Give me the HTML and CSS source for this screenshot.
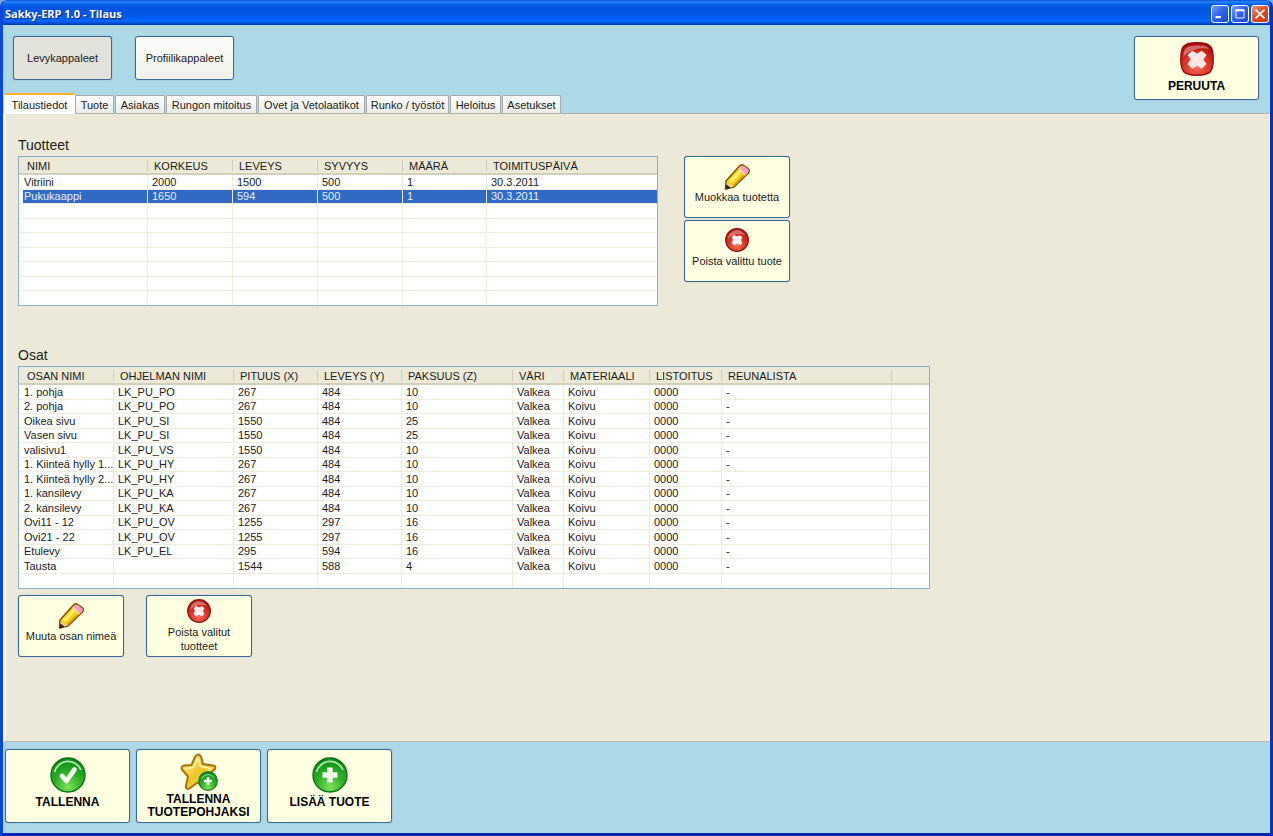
FILE: index.html
```html
<!DOCTYPE html>
<html lang="fi">
<head>
<meta charset="utf-8">
<title>Sakky-ERP 1.0 - Tilaus</title>
<link rel="stylesheet" href="styles.css">
</head>
<body>
<svg class="defs" aria-hidden="true">
  <defs>
    <radialGradient id="g-red" cx="50%" cy="75%" r="75%"><stop offset="0" stop-color="#f4705a"/><stop offset=".55" stop-color="#da3023"/><stop offset="1" stop-color="#a80c0c"/></radialGradient>
    <radialGradient id="g-green" cx="50%" cy="85%" r="80%"><stop offset="0" stop-color="#7fe05a"/><stop offset=".5" stop-color="#31b02a"/><stop offset="1" stop-color="#0e8a1c"/></radialGradient>
    <linearGradient id="g-gold" x1="0" y1="0" x2="1" y2="1"><stop offset="0" stop-color="#fff3a0"/><stop offset=".5" stop-color="#efc52a"/><stop offset="1" stop-color="#f8dd55"/></linearGradient>
    <symbol id="i-cancel" viewBox="0 0 34 34">
      <path d="M17 .8C24 .8 27.500 1.500 30 4C32.500 6.500 33.200 10 33.200 17C33.200 24 32.500 27.500 30 30C27.500 32.500 24 33.200 17 33.200C10 33.200 6.500 32.500 4 30C1.500 27.500 .8 24 .8 17C.8 10 1.500 6.500 4 4C6.500 1.500 10 .8 17 .8Z" fill="url(#g-red)" stroke="#960b0b" stroke-width="1.400"/>
      <path d="M3.500 15C3.500 6 6 3.500 17 3.500C24 3.500 27 4 29 7C22 5 9 7 3.500 15Z" fill="#fff" opacity=".35"/>
      <path d="M12.500 9.500L17 12.500L21.500 9.500L25.500 13L22.500 17.500L25.500 22L21.500 26L17 22.800L12.500 26L8.500 22L11.500 17.500L8.500 13Z" fill="#ffe6e2" stroke="#ffe6e2" stroke-width="1.500" stroke-linejoin="round"/>
    </symbol>
    <symbol id="i-delete" viewBox="0 0 24 24">
      <circle cx="12" cy="12" r="11.300" fill="url(#g-red)" stroke="#8e1010" stroke-width="1.200"/>
      <path d="M3 11A9 9 0 0 1 20 7C14 5 7 6 3 11Z" fill="#fff" opacity=".35"/>
      <path d="M9 7.500L12 9L15 7.500L16.800 9.300L15.500 12L16.800 15L15 16.800L12 15.300L9 16.800L7.200 15L8.500 12L7.200 9.300Z" fill="#fff0ee" stroke="#fff0ee" stroke-linejoin="round"/>
    </symbol>
    <symbol id="i-pencil" viewBox="0 0 26 26">
      <path d="M1.500 25L2 17L15.500 2Q17.500 .3 19.500 1.300L24.500 5Q26 6.500 24.500 9L10 23Z" fill="#f6ce22" stroke="#80590c" stroke-width="1.600" stroke-linejoin="round"/>
      <path d="M5 17L16.500 4.500L19 6L7.500 19Z" fill="#fff06a"/>
      <path d="M9 21L21.500 9L23 10L10.500 22Z" fill="#d79610"/>
      <path d="M15.500 3.800L17.500 1.800Q19 1.500 20 2L24 5.200Q25 6.500 24 8.500L21.800 10.500Z" fill="#f49ac4"/>
      <path d="M14.500 5L15.500 3.800L21.800 10.500L20.500 11.500Z" fill="#e5dbbf"/>
      <path d="M2.200 24.500L2.700 18L9.500 22.500Z" fill="#e8c98a"/>
      <path d="M2 25L2.300 21L6 23.800Z" fill="#2c241c" stroke="#2c241c"/>
    </symbol>
    <symbol id="i-ball" viewBox="0 0 36 36">
      <circle cx="18" cy="18" r="17" fill="url(#g-green)" stroke="#0a7416" stroke-width="1.400"/>
      <path d="M4.500 15A14 14 0 0 1 31 13" fill="none" stroke="#d4ffc8" stroke-width="1.800" opacity=".8"/>
    </symbol>
    <symbol id="i-check" viewBox="0 0 36 36">
      <use href="#i-ball"/>
      <path d="M12 19L16.500 24L24.500 12.500" fill="none" stroke="#f4fff0" stroke-width="4.800" stroke-linejoin="round" stroke-linecap="round"/>
    </symbol>
    <symbol id="i-plus" viewBox="0 0 36 36">
      <use href="#i-ball"/>
      <path d="M18 10.500V25.500M10.500 18H25.500" fill="none" stroke="#effbea" stroke-width="5.500" stroke-linejoin="round"/>
    </symbol>
    <symbol id="i-star" viewBox="0 0 38 38">
      <path d="M18 1.500Q20.500 1.500 21.500 5L23 11L33 12.500Q37 13.500 34.500 16.500L27.500 23L28 31Q28 35.500 24 33.500L17.500 29.500L9.500 35.500Q5.500 37 6 32.500L8 23.500L2 16.500Q.5 13 4.500 12.500L11.500 12L15 4Q16.500 1.500 18 1.500Z" fill="url(#g-gold)" stroke="#a87410" stroke-width="2" stroke-linejoin="round"/>
      <path d="M18 5L20.500 13.500L31 15.500L24.500 21M18 5L13.500 14.500L5 15.500" fill="none" stroke="#fff8be" stroke-width="1.300"/>
      <circle cx="28" cy="28" r="9.300" fill="url(#g-green)" stroke="#157c1c" stroke-width="1.200"/>
      <path d="M21.500 26A7 7 0 0 1 34 25" fill="none" stroke="#d4ffc8" opacity=".7"/>
      <path d="M28 24V32M24 28H32" stroke="#f4fff0" stroke-width="2.600"/>
    </symbol>
  </defs>
</svg>

<div class="window">
  <header class="titlebar">
    <h1 class="title">Sakky-ERP 1.0 - Tilaus</h1>
    <div class="controls">
      <button class="ctl" aria-label="Pienennä"><svg viewBox="0 0 18 18"><path d="M4 12.500H10" stroke="#fff" stroke-width="2.500"/></svg></button>
      <button class="ctl" aria-label="Suurenna"><svg viewBox="0 0 18 18"><path d="M4.500 4.500H13.500V13.500H4.500Z" fill="none" stroke="#fff"/><path d="M4 5H14" stroke="#fff" stroke-width="2"/></svg></button>
      <button class="ctl ctl-close" aria-label="Sulje"><svg viewBox="0 0 18 18"><path d="M4 4L14 14M14 4L4 14" stroke="#fff" stroke-width="2"/></svg></button>
    </div>
  </header>

  <div class="toolbar">
    <button class="btn btn-view is-pressed">Levykappaleet</button>
    <button class="btn btn-view">Profiilikappaleet</button>
    <button class="btn btn-cream btn-cancel"><svg class="ico-34"><use href="#i-cancel"/></svg><span>PERUUTA</span></button>
  </div>

  <div class="tabs" role="tablist">
    <button class="tab is-active" role="tab" aria-selected="true">Tilaustiedot</button>
    <button class="tab" role="tab">Tuote</button>
    <button class="tab" role="tab">Asiakas</button>
    <button class="tab" role="tab">Rungon mitoitus</button>
    <button class="tab" role="tab">Ovet ja Vetolaatikot</button>
    <button class="tab" role="tab">Runko / työstöt</button>
    <button class="tab" role="tab">Heloitus</button>
    <button class="tab" role="tab">Asetukset</button>
  </div>

  <main class="panel" role="tabpanel">
    <section>
      <h2 class="heading">Tuotteet</h2>
      <div class="products">
        <table class="list">
          <colgroup><col class="w129"><col class="w85"><col class="w85"><col class="w85"><col class="w84"><col class="w170"></colgroup>
          <thead><tr><th>NIMI</th><th>KORKEUS</th><th>LEVEYS</th><th>SYVYYS</th><th>MÄÄRÄ</th><th>TOIMITUSPÄIVÄ</th></tr></thead>
          <tbody>
            <tr><td>Vitriini</td><td>2000</td><td>1500</td><td>500</td><td>1</td><td>30.3.2011</td></tr>
            <tr class="is-selected"><td>Pukukaappi</td><td>1650</td><td>594</td><td>500</td><td>1</td><td>30.3.2011</td></tr>
            <tr><td></td><td></td><td></td><td></td><td></td><td></td></tr>
            <tr><td></td><td></td><td></td><td></td><td></td><td></td></tr>
            <tr><td></td><td></td><td></td><td></td><td></td><td></td></tr>
            <tr><td></td><td></td><td></td><td></td><td></td><td></td></tr>
            <tr><td></td><td></td><td></td><td></td><td></td><td></td></tr>
            <tr><td></td><td></td><td></td><td></td><td></td><td></td></tr>
            <tr><td></td><td></td><td></td><td></td><td></td><td></td></tr>
          </tbody>
        </table>
        <div class="side">
          <button class="btn btn-cream btn-small"><svg class="ico-26"><use href="#i-pencil"/></svg><span>Muokkaa tuotetta</span></button>
          <button class="btn btn-cream btn-small"><svg class="ico-24"><use href="#i-delete"/></svg><span>Poista valittu tuote</span></button>
        </div>
      </div>
    </section>

    <section class="parts">
      <h2 class="heading">Osat</h2>
      <table class="list">
        <colgroup><col class="w95"><col class="w120"><col class="w84"><col class="w84"><col class="w111"><col class="w51"><col class="w86"><col class="w72"><col class="w170"><col class="w37"></colgroup>
        <thead><tr><th>OSAN NIMI</th><th>OHJELMAN NIMI</th><th>PITUUS (X)</th><th>LEVEYS (Y)</th><th>PAKSUUS (Z)</th><th>VÄRI</th><th>MATERIAALI</th><th>LISTOITUS</th><th>REUNALISTA</th><th></th></tr></thead>
        <tbody>
          <tr><td>1. pohja</td><td>LK_PU_PO</td><td>267</td><td>484</td><td>10</td><td>Valkea</td><td>Koivu</td><td>0000</td><td>-</td><td></td></tr>
          <tr><td>2. pohja</td><td>LK_PU_PO</td><td>267</td><td>484</td><td>10</td><td>Valkea</td><td>Koivu</td><td>0000</td><td>-</td><td></td></tr>
          <tr><td>Oikea sivu</td><td>LK_PU_SI</td><td>1550</td><td>484</td><td>25</td><td>Valkea</td><td>Koivu</td><td>0000</td><td>-</td><td></td></tr>
          <tr><td>Vasen sivu</td><td>LK_PU_SI</td><td>1550</td><td>484</td><td>25</td><td>Valkea</td><td>Koivu</td><td>0000</td><td>-</td><td></td></tr>
          <tr><td>valisivu1</td><td>LK_PU_VS</td><td>1550</td><td>484</td><td>10</td><td>Valkea</td><td>Koivu</td><td>0000</td><td>-</td><td></td></tr>
          <tr><td>1. Kiinteä hylly 1...</td><td>LK_PU_HY</td><td>267</td><td>484</td><td>10</td><td>Valkea</td><td>Koivu</td><td>0000</td><td>-</td><td></td></tr>
          <tr><td>1. Kiinteä hylly 2...</td><td>LK_PU_HY</td><td>267</td><td>484</td><td>10</td><td>Valkea</td><td>Koivu</td><td>0000</td><td>-</td><td></td></tr>
          <tr><td>1. kansilevy</td><td>LK_PU_KA</td><td>267</td><td>484</td><td>10</td><td>Valkea</td><td>Koivu</td><td>0000</td><td>-</td><td></td></tr>
          <tr><td>2. kansilevy</td><td>LK_PU_KA</td><td>267</td><td>484</td><td>10</td><td>Valkea</td><td>Koivu</td><td>0000</td><td>-</td><td></td></tr>
          <tr><td>Ovi11 - 12</td><td>LK_PU_OV</td><td>1255</td><td>297</td><td>16</td><td>Valkea</td><td>Koivu</td><td>0000</td><td>-</td><td></td></tr>
          <tr><td>Ovi21 - 22</td><td>LK_PU_OV</td><td>1255</td><td>297</td><td>16</td><td>Valkea</td><td>Koivu</td><td>0000</td><td>-</td><td></td></tr>
          <tr><td>Etulevy</td><td>LK_PU_EL</td><td>295</td><td>594</td><td>16</td><td>Valkea</td><td>Koivu</td><td>0000</td><td>-</td><td></td></tr>
          <tr><td>Tausta</td><td></td><td>1544</td><td>588</td><td>4</td><td>Valkea</td><td>Koivu</td><td>0000</td><td>-</td><td></td></tr>
          <tr><td></td><td></td><td></td><td></td><td></td><td></td><td></td><td></td><td></td><td></td></tr>
        </tbody>
      </table>
      <div class="part-actions">
        <button class="btn btn-cream btn-small"><svg class="ico-26"><use href="#i-pencil"/></svg><span>Muuta osan nimeä</span></button>
        <button class="btn btn-cream btn-small btn-two"><svg class="ico-24"><use href="#i-delete"/></svg><span>Poista valitut tuotteet</span></button>
      </div>
    </section>
  </main>

  <footer class="footer">
    <button class="btn btn-cream btn-big"><svg class="ico-36"><use href="#i-check"/></svg><span>TALLENNA</span></button>
    <button class="btn btn-cream btn-big btn-tall"><svg class="ico-38"><use href="#i-star"/></svg><span>TALLENNA TUOTEPOHJAKSI</span></button>
    <button class="btn btn-cream btn-big"><svg class="ico-36"><use href="#i-plus"/></svg><span>LISÄÄ TUOTE</span></button>
  </footer>
</div>
</body>
</html>
```
FILE: styles.css
```css
* { box-sizing: border-box; }

body {
  margin: 0;
  background: #7ba7e8;
  font: 11px/14px "Liberation Sans", Arial, sans-serif;
  color: #1c1c1c;
}

button { font: inherit; color: inherit; margin: 0; padding: 0; }
.defs { position: absolute; width: 0; height: 0; }

.window {
  display: flex;
  flex-direction: column;
  min-height: 100vh;
  border: solid #0a48dc;
  border-width: 0 3px 3px;
  border-right-color: #0831c4;
  border-bottom-color: #0628b0;
  border-radius: 7px 7px 0 0;
  overflow: hidden;
  background: #add8e6;
}

/* title bar */
.titlebar {
  display: flex;
  justify-content: space-between;
  align-items: center;
  height: 25px;
  margin: 0 -3px;
  padding: 2px 4px 0 5px;
  background: linear-gradient(#0a50d8 0, #2b86fb 2px, #0662ee 4px, #0054e0 9px, #0058ea 16px, #0267ff 21px, #0450d8 23px, #0338b4 25px);
}
.title {
  margin: 0;
  font: 700 11px/16px "Open Sans", "Trebuchet MS", sans-serif;
  color: #fff;
  text-shadow: 1px 1px #0c2c80;
}
.controls { display: flex; gap: 2px; }
.ctl {
  width: 18px;
  height: 18px;
  border: 1px solid #fff;
  border-radius: 3px;
  background: linear-gradient(135deg, #7aa0f4, #2f62e4 50%, #1c4cd0);
}
.ctl svg { display: block; width: 16px; height: 16px; }
.ctl-close { background: linear-gradient(135deg, #f0957a, #dc4c24 50%, #c03a10); }

/* buttons */
.btn {
  border: 1px solid #3b6a96;
  border-radius: 3px;
  box-shadow: 0 0 1px #5b86ac;
  background: linear-gradient(#fcfcfb, #f0f0ea);
}
.btn svg { flex: none; }
.btn-cream {
  display: flex;
  flex-direction: column;
  align-items: center;
  background: #ffffe1;
}
.btn-view { width: 99px; height: 44px; }
.btn-view.is-pressed { background: #e2e1da; }
.btn-cancel {
  width: 125px;
  height: 64px;
  margin-left: auto;
  padding-top: 5px;
  gap: 3px;
  font-weight: 700;
  font-size: 12px;
  color: #000;
}
.btn-small { width: 106px; height: 62px; padding-top: 7px; }
.btn-small span { padding: 0 12px; }
.btn-small .ico-26 + span, .side .btn-small span { padding: 0; white-space: nowrap; }
.btn-small .ico-24 { margin-bottom: 2px; }
.btn-two { padding-top: 3px; }
.btn-big {
  width: 125px;
  height: 74px;
  padding-top: 7px;
  gap: 2px;
  font-weight: 700;
  font-size: 12px;
  color: #000;
}
.btn-tall { padding-top: 3px; gap: 2px; }
.btn-tall span { line-height: 13px; }

.ico-24 { width: 24px; height: 24px; }
.ico-26 { width: 26px; height: 26px; }
.ico-34 { width: 34px; height: 34px; }
.ico-36 { width: 36px; height: 36px; }
.ico-38 { width: 38px; height: 38px; }

/* toolbar and tabs */
.toolbar {
  display: flex;
  align-items: flex-start;
  gap: 23px;
  height: 68px;
  padding: 11px 11px 0 10px;
}
.tabs {
  display: grid;
  grid-template-columns: 71px 40px 51px 92px 108px 84px 52px 60px;
  align-items: end;
  height: 20px;
  padding-left: 1px;
}
.tab {
  height: 18px;
  margin-right: 1px;
  border: 1px solid #a5acb0;
  border-bottom: 0;
  border-radius: 2px 2px 0 0;
  background: linear-gradient(#fff, #ecebe6);
  white-space: nowrap;
}
.tab.is-active {
  height: 21px;
  margin: 0 0 -1px;
  border: 0;
  border-top: 2px solid #ffb02e;
  background: #fcfcfe;
  position: relative;
}

/* tab page */
.panel {
  flex: 1;
  padding: 23px 15px 24px 12px;
  border: 1px solid #b4b5ac;
  border-left: 3px solid #fbfbf8;
  border-right-color: #f4f3ee;
  background: #ece9d8;
}
.heading { margin: 0 0 3px; font: 14px/16px "Liberation Sans", Arial, sans-serif; }
.products { display: flex; align-items: flex-start; gap: 26px; }
.side { display: flex; flex-direction: column; gap: 2px; }
.parts { margin-top: 41px; }
.part-actions { display: flex; gap: 22px; margin-top: 6px; }

/* list views */
.list {
  width: min-content;
  table-layout: fixed;
  border: 1px solid #8fb0cd;
  border-collapse: separate;
  border-spacing: 0;
  background: #fff;
}
.list th {
  height: 18px;
  padding: 2px 0 0 6px;
  border-bottom: 2px solid #d2cfba;
  background: linear-gradient(#d0cdbd, #d0cdbd) 100% 60% / 1px 11px no-repeat #ece9d8;
  font-weight: 400;
  line-height: 14px;
  text-align: left;
  white-space: nowrap;
}
.list th:first-child { padding-left: 8px; }
.list th:last-child { background: #ece9d8; }
.list td {
  height: 14px;
  padding: 0 0 0 4px;
  border-right: 1px solid #efecdc;
  border-bottom: 1px solid #efecdc;
  line-height: 13px;
  white-space: nowrap;
}
.list tr:nth-child(odd) td { height: 15px; }
.list td:first-child { padding-left: 5px; }
.list td:last-child { border-right: 0; }
.list tbody tr:last-child td { height: 14px; border-bottom: 0; }
.list .is-selected td { background: #316ac5; color: #e6eefb; }
.list .is-selected td:first-child { background: linear-gradient(90deg, #fff 4px, #316ac5 4px); }

.w37 { width: 37px; }
.w51 { width: 51px; }
.w72 { width: 72px; }
.w84 { width: 84px; }
.w85 { width: 85px; }
.w86 { width: 86px; }
.w95 { width: 95px; }
.w111 { width: 111px; }
.w120 { width: 120px; }
.w129 { width: 129px; }
.w170 { width: 170px; }

/* bottom bar */
.footer {
  display: flex;
  gap: 6px;
  padding: 7px 2px 10px;
}
```
